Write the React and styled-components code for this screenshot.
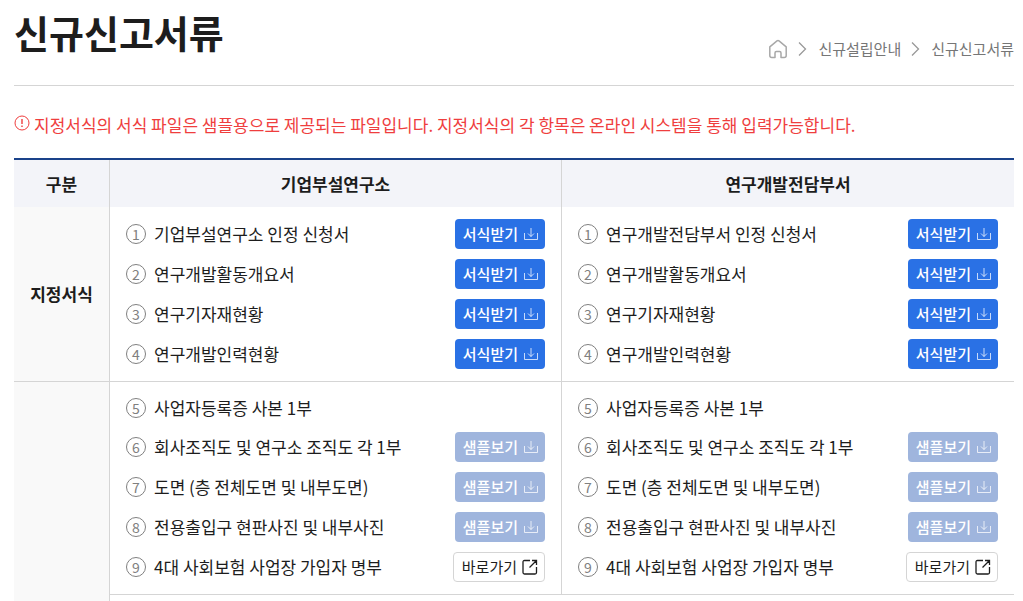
import styled, { createGlobalStyle } from "styled-components";

const GlobalStyle = createGlobalStyle`
  * {
    box-sizing: border-box;
  }
  body {
    margin: 0;
    background: #fff;
    color: #1d1d1d;
    font-family: "Noto Sans CJK KR", "Noto Sans", sans-serif;
  }
`;

const Page = styled.main`
  padding: 0 9px 0 14px;
`;

const PageHeader = styled.header`
  display: flex;
  justify-content: space-between;
  height: 86px;
  border-bottom: 1px solid #d5d5d5;
`;

const Title = styled.h1`
  margin: 0;
  padding-top: 4px;
  font-size: 38px;
  font-weight: 700;
  line-height: 56px;
`;

const Breadcrumb = styled.nav`
  display: flex;
  align-items: center;
  gap: 8px;
  height: 24px;
  margin-top: 37px;
  font-size: 15px;
  line-height: 24px;
  color: #767676;

  a {
    display: flex;
    color: inherit;
    text-decoration: none;
  }
`;

const Notice = styled.p`
  display: flex;
  align-items: center;
  gap: 4px;
  margin: 25px 0 19px;
  font-size: 17px;
  line-height: 28px;
  color: #ef3e3e;

  svg {
    flex: none;
    margin-bottom: 4px;
  }
`;

const FormTable = styled.table`
  width: 100%;
  table-layout: fixed;
  border-collapse: separate;
  border-spacing: 0;
  border-top: 2px solid #1a428a;
  font-size: 17px;
  line-height: 28px;

  th,
  td {
    padding: 0;
  }
  th + th,
  td {
    border-left: 1px solid #d5d5d5;
  }
  tbody tr + tr > * {
    border-top: 1px solid #d5d5d5;
  }
`;

const LabelCol = styled.col`
  width: 95px;
`;

const LabCol = styled.col`
  width: 45.2%;
`;

const HeadCell = styled.th`
  height: 47px;
  background: #f3f4f9;
  font-weight: 700;
`;

const LabelCell = styled.th`
  background: #f9f9f9;
  font-weight: 700;
`;

const EtcCell = styled.td`
  height: 7px;
`;

const DocList = styled.ul`
  display: flex;
  flex-direction: column;
  gap: 10px;
  margin: 0;
  padding: 12px 16px;
  list-style: none;
`;

const DocItem = styled.li`
  display: flex;
  align-items: center;
  gap: 8px;
`;

const DocNumber = styled.span`
  flex: none;
  width: 20px;
  height: 20px;
  border: 1px solid #808080;
  border-radius: 50%;
  font-size: 14px;
  line-height: 18px;
  text-align: center;
  color: #808080;
`;

const DocName = styled.span`
  flex: 1;
  white-space: nowrap;
`;

const DocButton = styled.button`
  display: flex;
  align-items: center;
  gap: 5px;
  height: 30px;
  padding: 0 6px 0 8px;
  border: 0;
  border-radius: 4px;
  background: ${({ $variant }) => ($variant === "form" ? "#2a71e5" : "#9fb5dd")};
  color: #fff;
  font-family: inherit;
  font-size: 15px;
  font-weight: 500;
  line-height: 28px;
  white-space: nowrap;
  cursor: pointer;
`;

const GoLink = styled.a`
  display: flex;
  align-items: center;
  gap: 5px;
  height: 30px;
  padding: 0 6px 0 8px;
  border: 1px solid #d5d5d5;
  border-radius: 4px;
  color: #1d1d1d;
  font-size: 15px;
  line-height: 28px;
  text-decoration: none;
  white-space: nowrap;
`;

const HomeIcon = () => (
  <svg width="20" height="20" viewBox="0 0 20 20" fill="none" stroke="#a8a8a8" strokeWidth="1.5" strokeLinejoin="round">
    <path d="M1.8 7.8 9 1.9q1-.8 2 0l7.2 5.9v8.7q0 2-2 2H13v-4.6q0-1.4-1.4-1.4H8.4Q7 12.5 7 13.9v4.6H3.8q-2 0-2-2z" />
  </svg>
);

const ChevronIcon = () => (
  <svg width="14" height="20" viewBox="0 0 14 20" fill="none" stroke="#999" strokeWidth="1.3">
    <path d="m3 3.5 6.5 6.5L3 16.5" />
  </svg>
);

const AlertIcon = () => (
  <svg width="16" height="16" viewBox="0 0 16 16" fill="none" stroke="#ef3e3e">
    <circle cx="8" cy="8" r="7" />
    <path d="M8 4v5M8 10.5V12" strokeWidth="1.4" />
  </svg>
);

const DownloadIcon = () => (
  <svg width="16" height="16" viewBox="0 0 16 16" fill="none" stroke="currentColor" strokeOpacity="0.75">
    <path d="M1.5 7v6.5h13V7M8 2v8.5M5 7.5l3 3 3-3" />
  </svg>
);

const GoIcon = () => (
  <svg width="16" height="16" viewBox="0 0 16 16" fill="none" stroke="#1d1d1d" strokeWidth="1.3">
    <path d="M8 1.5H2.5Q1 1.5 1 3v10.5Q1 15 2.5 15H13q1.5 0 1.5-1.5V8M10 1.5h4.5V6M14.5 1.5l-7 7" />
  </svg>
);

const formDocs = (first) => [
  { no: 1, name: first, type: "form" },
  { no: 2, name: "연구개발활동개요서", type: "form" },
  { no: 3, name: "연구기자재현황", type: "form" },
  { no: 4, name: "연구개발인력현황", type: "form" },
];

const attachedDocs = [
  { no: 5, name: "사업자등록증 사본 1부" },
  { no: 6, name: "회사조직도 및 연구소 조직도 각 1부", type: "sample" },
  { no: 7, name: "도면 (층 전체도면 및 내부도면)", type: "sample" },
  { no: 8, name: "전용출입구 현판사진 및 내부사진", type: "sample" },
  { no: 9, name: "4대 사회보험 사업장 가입자 명부", type: "link" },
];

const DocAction = ({ type }) => {
  if (!type) return null;
  if (type === "link") {
    return (
      <GoLink href="#">
        바로가기
        <GoIcon />
      </GoLink>
    );
  }
  return (
    <DocButton type="button" $variant={type}>
      {type === "form" ? "서식받기" : "샘플보기"}
      <DownloadIcon />
    </DocButton>
  );
};

const Docs = ({ docs }) => (
  <DocList>
    {docs.map((doc) => (
      <DocItem key={doc.no}>
        <DocNumber>{doc.no}</DocNumber>
        <DocName>{doc.name}</DocName>
        <DocAction type={doc.type} />
      </DocItem>
    ))}
  </DocList>
);

const App = () => {
  return (
    <>
      <GlobalStyle />
      <Page>
        <PageHeader>
          <Title>신규신고서류</Title>
          <Breadcrumb>
            <a href="#" aria-label="홈">
              <HomeIcon />
            </a>
            <ChevronIcon />
            <a href="#">신규설립안내</a>
            <ChevronIcon />
            <a href="#">신규신고서류</a>
          </Breadcrumb>
        </PageHeader>
        <Notice>
          <AlertIcon />
          지정서식의 서식 파일은 샘플용으로 제공되는 파일입니다. 지정서식의 각 항목은 온라인 시스템을 통해 입력가능합니다.
        </Notice>
        <FormTable>
          <colgroup>
            <LabelCol />
            <LabCol />
            <col />
          </colgroup>
          <thead>
            <tr>
              <HeadCell scope="col">구분</HeadCell>
              <HeadCell scope="col">기업부설연구소</HeadCell>
              <HeadCell scope="col">연구개발전담부서</HeadCell>
            </tr>
          </thead>
          <tbody>
            <tr>
              <LabelCell scope="row">지정서식</LabelCell>
              <td>
                <Docs docs={formDocs("기업부설연구소 인정 신청서")} />
              </td>
              <td>
                <Docs docs={formDocs("연구개발전담부서 인정 신청서")} />
              </td>
            </tr>
            <tr>
              <LabelCell rowSpan={2} />
              <td>
                <Docs docs={attachedDocs} />
              </td>
              <td>
                <Docs docs={attachedDocs} />
              </td>
            </tr>
            <tr>
              <EtcCell colSpan={2} />
            </tr>
          </tbody>
        </FormTable>
      </Page>
    </>
  );
};

export default App;
